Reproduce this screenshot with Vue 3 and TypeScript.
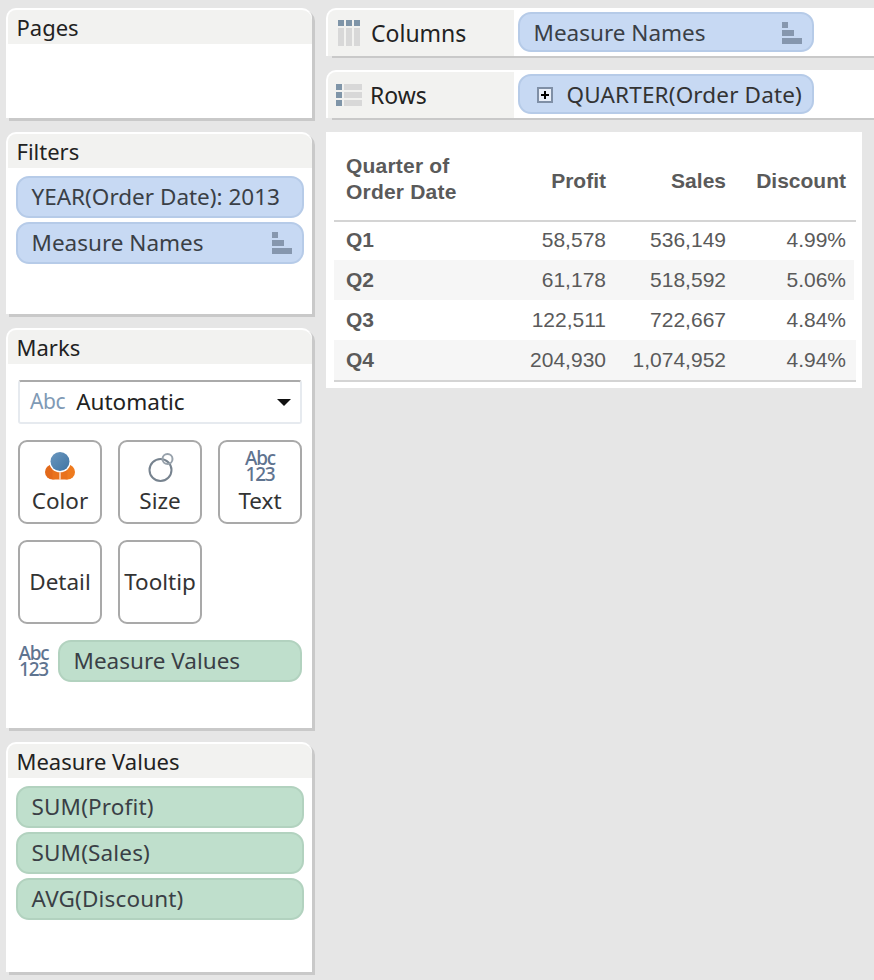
<script setup lang="ts">
interface Row {
  quarter: string
  profit: string
  sales: string
  discount: string
}

const rows: Row[] = [
  { quarter: 'Q1', profit: '58,578', sales: '536,149', discount: '4.99%' },
  { quarter: 'Q2', profit: '61,178', sales: '518,592', discount: '5.06%' },
  { quarter: 'Q3', profit: '122,511', sales: '722,667', discount: '4.84%' },
  { quarter: 'Q4', profit: '204,930', sales: '1,074,952', discount: '4.94%' },
]

const measures = ['SUM(Profit)', 'SUM(Sales)', 'AVG(Discount)']
</script>

<template>
  <div class="page">
    <aside class="side">
      <section class="card pages-card">
        <h2 class="card-title">Pages</h2>
      </section>

      <section class="card filters-card">
        <h2 class="card-title">Filters</h2>
        <div class="pill-list">
          <div class="pill blue">YEAR(Order Date): 2013</div>
          <div class="pill blue">
            <span>Measure Names</span>
            <span class="stairs"><i></i><i></i><i></i></span>
          </div>
        </div>
      </section>

      <section class="card marks-card">
        <h2 class="card-title">Marks</h2>
        <div class="marks-body">
          <div class="mark-select">
            <span class="abc">Abc</span>
            <span class="mark-type">Automatic</span>
            <span class="arrow"></span>
          </div>
          <div class="mark-grid">
            <div class="mark-btn">
              <svg class="mark-icon" width="34" height="32" viewBox="0 0 34 32">
                <defs>
                  <linearGradient id="ball" x1="0" y1="0" x2="1" y2="1">
                    <stop offset="0" stop-color="#6a97bf" />
                    <stop offset="1" stop-color="#3f74a3" />
                  </linearGradient>
                </defs>
                <circle cx="9.5" cy="22" r="7.5" fill="#e2691a" />
                <circle cx="24.5" cy="22" r="7.5" fill="#ee7a1e" />
                <rect x="9.5" y="20" width="15" height="9.5" fill="#e9721c" />
                <circle cx="17" cy="11.5" r="10.8" fill="#fff" />
                <path d="M17 22 V30" stroke="#fbd9bf" stroke-width="1.5" fill="none" />
                <circle cx="17" cy="11.5" r="9.5" fill="url(#ball)" />
              </svg>
              <span class="btn-label">Color</span>
            </div>
            <div class="mark-btn">
              <svg class="mark-icon" width="32" height="32" viewBox="0 0 32 32">
                <circle cx="16.5" cy="20" r="11" fill="none" stroke="#77838f" stroke-width="2" />
                <circle cx="23.5" cy="9" r="5" fill="none" stroke="#98a2ac" stroke-width="2" />
              </svg>
              <span class="btn-label">Size</span>
            </div>
            <div class="mark-btn">
              <div class="abc-stack mark-icon">Abc<br />123</div>
              <span class="btn-label">Text</span>
            </div>
            <div class="mark-btn plain"><span>Detail</span></div>
            <div class="mark-btn plain"><span>Tooltip</span></div>
          </div>
          <div class="mark-shelf">
            <div class="abc-stack small">Abc<br />123</div>
            <div class="pill green">Measure Values</div>
          </div>
        </div>
      </section>

      <section class="card values-card">
        <h2 class="card-title">Measure Values</h2>
        <div class="pill-list">
          <div v-for="m in measures" :key="m" class="pill green measure">{{ m }}</div>
        </div>
      </section>
    </aside>

    <main class="main">
      <div class="shelf">
        <div class="shelf-label">
          <span class="cols-icon">
            <span v-for="n in 3" :key="n" class="col"><i></i><i></i></span>
          </span>
          <span class="columns-text">Columns</span>
        </div>
        <div class="pill blue shelf-pill">
          <span>Measure Names</span>
          <span class="stairs"><i></i><i></i><i></i></span>
        </div>
      </div>

      <div class="shelf">
        <div class="shelf-label">
          <span class="rows-icon">
            <span v-for="n in 3" :key="n" class="line"><i></i><i></i></span>
          </span>
          <span class="rows-text">Rows</span>
        </div>
        <div class="pill blue shelf-pill">
          <span class="plus-box"></span>
          <span class="quarter-text">QUARTER(Order Date)</span>
        </div>
      </div>

      <div class="viz">
        <div class="viz-row viz-head">
          <div class="first">Quarter of<br />Order Date</div>
          <div class="num">Profit</div>
          <div class="num">Sales</div>
          <div class="num">Discount</div>
        </div>
        <div v-for="r in rows" :key="r.quarter" class="viz-row viz-data">
          <div class="first">{{ r.quarter }}</div>
          <div>{{ r.profit }}</div>
          <div>{{ r.sales }}</div>
          <div>{{ r.discount }}</div>
        </div>
      </div>
    </main>
  </div>
</template>

<style>
html,
body {
  background: #e6e6e6;
}
</style>

<style scoped>
.page {
  display: flex;
  gap: 14px;
  width: 874px;
  height: 980px;
  box-sizing: border-box;
  padding: 8px 0 0 6px;
  overflow: hidden;
  background: #e6e6e6;
  font-family: "Noto Sans", "Open Sans", sans-serif;
  font-size: 22.5px;
  color: #333;
}

.side {
  display: flex;
  flex-direction: column;
  gap: 14px;
  width: 306px;
  flex: none;
}

.card {
  box-sizing: border-box;
  background: #fff;
  border-top: 2px solid #fff;
  border-left: 2px solid #fff;
  border-radius: 10px 10px 0 0;
  box-shadow: 3px 3px 0 #c9c9c9;
}

.pages-card { height: 110px; }
.filters-card { height: 182px; }
.marks-card { height: 400px; }
.values-card { height: 230px; }

.card-title {
  height: 34px;
  margin: 0;
  padding-left: 8.5px;
  background: #f2f2f0;
  border-radius: 8px 10px 0 0;
  font-size: 22px;
  font-weight: 400;
  line-height: 34px;
  color: #222;
}

.pill-list {
  display: flex;
  flex-direction: column;
  gap: 4px;
  padding: 8px 8px 0;
}

.pill {
  display: flex;
  align-items: center;
  justify-content: space-between;
  box-sizing: border-box;
  height: 42px;
  padding: 0 10px 0 13.5px;
  border: 2px solid;
  border-radius: 13px;
  line-height: 36px;
  white-space: nowrap;
  color: #3a3f46;
}

.pill.blue {
  background: #c7d9f3;
  border-color: #b6cbe8;
}

.pill.green {
  background: #bfdfcc;
  border-color: #b2d2bf;
}

.measure {
  letter-spacing: 0.15px;
}

.stairs {
  display: flex;
  flex-direction: column;
  gap: 2px;
  width: 20px;
}

.stairs i {
  display: block;
  height: 6px;
  background: #8697ae;
}

.stairs i:nth-child(1) { width: 6px; }
.stairs i:nth-child(2) { width: 12px; }
.stairs i:nth-child(3) { width: 20px; }

.marks-body {
  padding: 16px 10px 0;
}

.mark-select {
  display: flex;
  align-items: center;
  box-sizing: border-box;
  width: 284px;
  height: 44px;
  padding: 0 9px 2px 10px;
  border: 2px solid #e6eaef;
  border-top-color: #aaa;
  border-radius: 3px;
}

.abc {
  margin-right: 11px;
  font-size: 21px;
  letter-spacing: -0.4px;
  color: #7f9ab5;
}

.mark-type {
  flex: 1;
  color: #222;
}

.arrow {
  width: 0;
  height: 0;
  margin-top: 3px;
  border-top: 7px solid #111;
  border-left: 7.5px solid transparent;
  border-right: 7.5px solid transparent;
}

.mark-grid {
  display: grid;
  grid-template-columns: repeat(3, 84px);
  grid-auto-rows: 84px;
  gap: 16px;
  margin-top: 16px;
}

.mark-btn {
  display: flex;
  flex-direction: column;
  align-items: center;
  box-sizing: border-box;
  padding-top: 8px;
  border: 2px solid #a9a9a9;
  border-radius: 9px;
  line-height: 30px;
  color: #333;
}

.mark-btn.plain {
  justify-content: center;
  padding-top: 0;
}

.mark-icon {
  flex: none;
  height: 32px;
}

.btn-label {
  margin-top: 4px;
}

.abc-stack {
  font-size: 19px;
  font-weight: 500;
  line-height: 16px;
  letter-spacing: -1.2px;
  text-align: center;
  color: #5f7490;
}

.mark-shelf {
  display: flex;
  align-items: center;
  gap: 9px;
  margin-top: 16px;
}

.abc-stack.small {
  width: 31px;
  flex: none;
}

.mark-shelf .pill {
  width: 244px;
}

.main {
  display: flex;
  flex-direction: column;
  flex: 1;
  min-width: 0;
}

.shelf {
  display: flex;
  align-items: flex-start;
  box-sizing: border-box;
  height: 48px;
  margin-bottom: 14px;
  background: #fff;
  border-top: 2px solid #fff;
  border-left: 2px solid #fff;
  border-radius: 10px 0 0 0;
  box-shadow: 5px 3px 0 -1px #c9c9c9;
}

.shelf-label {
  display: flex;
  align-items: center;
  width: 186px;
  height: 46px;
  flex: none;
  background: #f2f2f0;
  border-radius: 8px 0 0 0;
  font-size: 23px;
  color: #222;
}

.cols-icon {
  display: flex;
  gap: 2px;
  margin-left: 10px;
  margin-right: 11px;
}

.col {
  display: flex;
  flex-direction: column;
  gap: 2px;
  width: 6px;
}

.col i:first-child {
  height: 6px;
  background: #7f95a8;
}

.col i:last-child {
  height: 18px;
  background: #d8d8d8;
}

.rows-icon {
  display: flex;
  flex-direction: column;
  gap: 2px;
  margin-left: 8px;
  margin-right: 8px;
}

.line {
  display: flex;
  gap: 2px;
}

.line i {
  height: 6px;
}

.line i:first-child {
  width: 6px;
  background: #7f95a8;
}

.line i:last-child {
  width: 18px;
  background: #d8d8d8;
}

.shelf-pill {
  width: 296px;
  height: 40px;
  margin: 2px 0 0 4px;
  padding-top: 1px;
}

.plus-box {
  position: relative;
  flex: none;
  box-sizing: border-box;
  width: 16px;
  height: 16px;
  margin-top: 1px;
  margin-left: 3px;
  border: 2px solid #7f8fa6;
  background: #e8eef8;
}

.plus-box::before,
.plus-box::after {
  content: "";
  position: absolute;
  background: #000;
}

.plus-box::before {
  left: 2px;
  top: 5px;
  width: 8px;
  height: 2px;
}

.plus-box::after {
  left: 5px;
  top: 2px;
  width: 2px;
  height: 8px;
}

.quarter-text {
  flex: 1;
  margin-left: 14px;
  letter-spacing: 0.15px;
  color: #333;
}

.viz {
  box-sizing: border-box;
  width: 536px;
  height: 256px;
  padding: 0 6px 0 8px;
  background: #fff;
  font-family: "Liberation Sans", Arial, sans-serif;
  font-size: 21px;
  color: #5a5a5a;
}

.viz-row {
  display: grid;
  grid-template-columns: 1fr 120px 120px 120px;
  align-items: center;
  width: 520px;
  box-sizing: border-box;
  padding: 0 8px 0 12px;
  text-align: right;
}

.viz-row .first {
  text-align: left;
}

.viz-head {
  width: 522px;
  height: 90px;
  padding: 6px 10px 0 12px;
  border-bottom: 2px solid #d4d4d4;
  font-weight: 700;
  line-height: 26px;
}

.viz-head .first {
  letter-spacing: 0.2px;
}

.viz-head .num {
  padding-top: 3px;
}

.viz-data {
  height: 40px;
  line-height: 40px;
}

.viz-data:nth-child(2) {
  height: 38px;
  padding-bottom: 2px;
  line-height: 36px;
}

.viz-data .first {
  font-weight: 700;
}

.viz-data:nth-child(odd) {
  background: #f6f6f6;
}

.viz-data:last-child {
  width: 522px;
  height: 42px;
  padding-right: 10px;
  border-bottom: 2px solid #d4d4d4;
}
</style>
